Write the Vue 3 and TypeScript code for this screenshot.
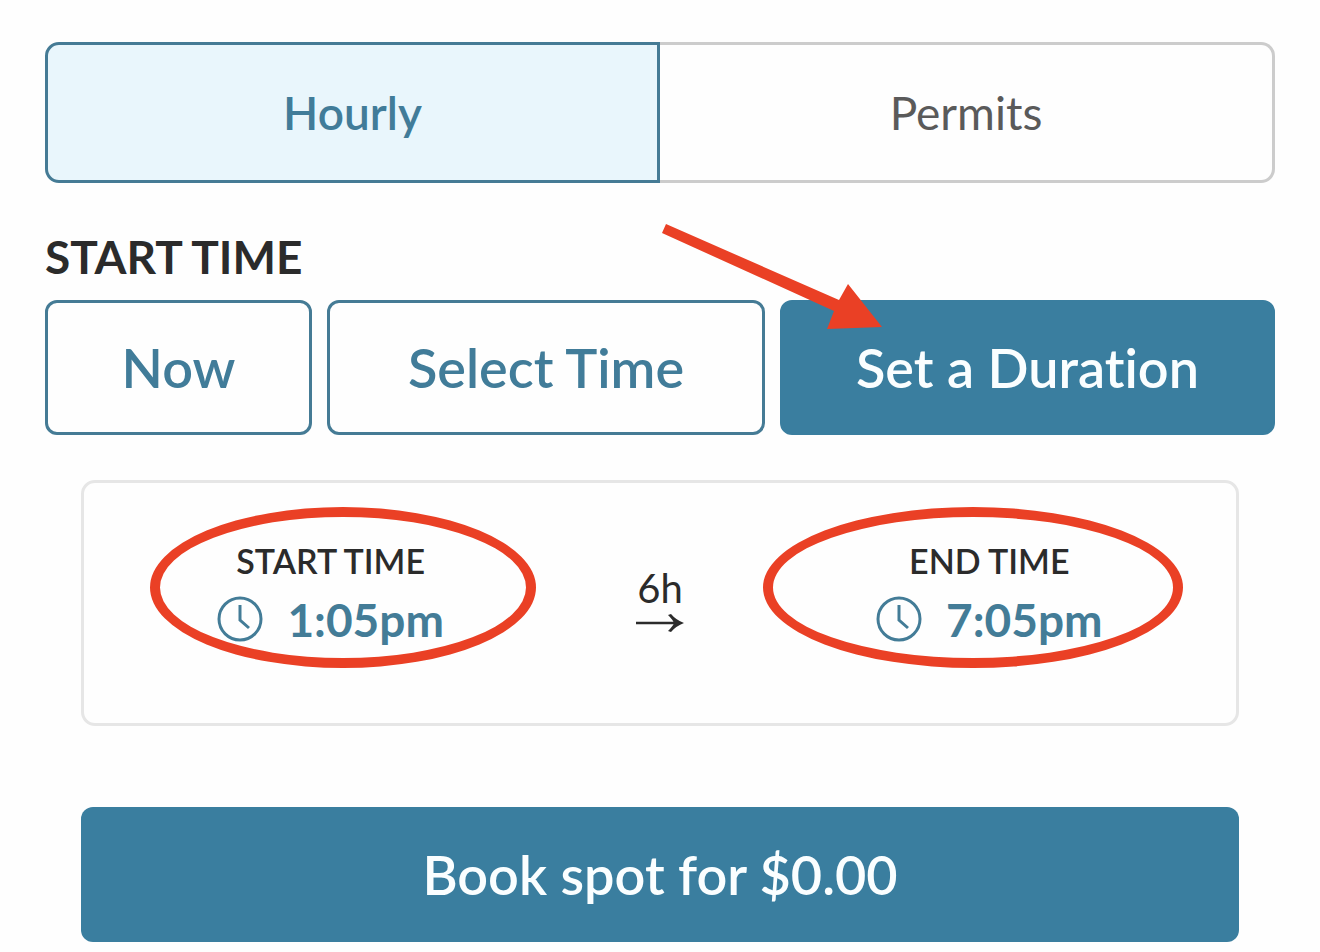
<script setup lang="ts">
import { ref } from 'vue'

type Plan = 'Hourly' | 'Permits'
type Mode = 'now' | 'select' | 'duration'

interface TimePoint {
  id: string
  label: string
  time: string
}

const plans: Plan[] = ['Hourly', 'Permits']
const plan = ref<Plan>('Hourly')

const modes: { id: Mode; label: string }[] = [
  { id: 'now', label: 'Now' },
  { id: 'select', label: 'Select Time' },
  { id: 'duration', label: 'Set a Duration' },
]
const mode = ref<Mode>('duration')

const start: TimePoint = { id: 'start', label: 'START TIME', time: '1:05pm' }
const end: TimePoint = { id: 'end', label: 'END TIME', time: '7:05pm' }
const points: TimePoint[] = [start, end]
</script>

<template>
  <main class="booking">
    <div class="tabs" role="group" aria-label="Parking type">
      <button
        v-for="p in plans"
        :key="p"
        type="button"
        class="tab"
        :class="{ active: plan === p }"
        :aria-pressed="plan === p"
        @click="plan = p"
      >
        {{ p }}
      </button>
    </div>

    <h2 id="start-heading" class="heading">START TIME</h2>
    <div class="modes" role="group" aria-labelledby="start-heading">
      <div v-for="m in modes" :key="m.id" class="mode-cell" :class="m.id">
        <button
          type="button"
          class="mode"
          :class="{ active: mode === m.id }"
          :aria-pressed="mode === m.id"
          @click="mode = m.id"
        >
          {{ m.label }}
        </button>
        <svg v-if="m.id === 'duration'" class="pointer" viewBox="0 0 222 108" aria-hidden="true">
          <path d="M4 1 L177 77 L186 61 L220 104 L165 106 L172 88 L0 10 Z" />
        </svg>
      </div>
    </div>

    <section class="summary" aria-label="Duration">
      <template v-for="(t, i) in points" :key="t.id">
        <div v-if="i === 1" class="span">
          <span class="hours">6h</span>
          <svg class="arrow" viewBox="0 0 48 20" aria-hidden="true">
            <path d="M0 10 H42" fill="none" stroke="currentColor" stroke-width="2.5" />
            <path d="M35 1 Q40 7 48 10 Q40 13 35 19 L32 18 Q37 13 38 10 Q37 7 32 2 Z" fill="currentColor" />
          </svg>
        </div>
        <div class="point">
          <span :id="`${t.id}-label`" class="label">{{ t.label }}</span>
          <button type="button" class="time" :aria-describedby="`${t.id}-label`">
            <svg class="clock" viewBox="0 0 46 46" aria-hidden="true">
              <circle cx="23" cy="23" r="21" />
              <path d="M23 9 V24 L32 32" />
            </svg>
            <span>{{ t.time }}</span>
          </button>
          <span class="ring" :class="t.id" aria-hidden="true"></span>
        </div>
      </template>
    </section>

    <button type="button" class="book">Book spot for $0.00</button>
  </main>
</template>

<style>
body {
  background: #fefefe;
}
</style>

<style scoped>
.booking {
  --blue: #3a7e9f;
  --line: #457b95;
  --mark: #ea4025;
  --ink: #2b2b2b;
  box-sizing: border-box;
  display: flex;
  flex-direction: column;
  padding: 42px 45px 10px;
  font-family: Lato, "Open Sans", sans-serif;
  font-variant-ligatures: none;
  color: var(--ink);
}

button {
  box-sizing: border-box;
  margin: 0;
  font-family: inherit;
  font-variant-ligatures: none;
  font-weight: 600;
  cursor: pointer;
}

.tabs {
  display: flex;
}

.tab {
  flex: 0 0 50%;
  height: 141px;
  border: 3px solid #cccccc;
  border-left: 0;
  border-radius: 0 14px 14px 0;
  background: #fefefe;
  color: #5a5a5a;
  font-size: 46px;
  font-weight: 400;
}

.tab:first-child {
  border-left: 3px solid #cccccc;
  border-radius: 14px 0 0 14px;
}

.tab.active {
  border-color: var(--line);
  background: #e9f6fc;
  color: #417c99;
  font-weight: 600;
}

.heading {
  margin: 44px 0 13px;
  font-size: 46px;
  line-height: 60px;
  font-weight: 700;
}

.modes {
  display: flex;
  gap: 15px;
}

.mode-cell {
  position: relative;
  flex: 267 1 0;
}

.mode-cell.select {
  flex-grow: 438;
}

.mode-cell.duration {
  flex-grow: 495;
}

.mode {
  width: 100%;
  height: 135px;
  border: 3px solid var(--line);
  border-radius: 12px;
  background: #fefefe;
  color: #417c99;
  font-size: 54px;
}

.mode.active {
  border-color: var(--blue);
  background: var(--blue);
  color: #fafeff;
}

.pointer {
  position: absolute;
  top: -77px;
  left: -118px;
  width: 222px;
  height: 108px;
  fill: var(--mark);
  pointer-events: none;
}

.summary {
  display: grid;
  grid-template-columns: repeat(3, 1fr);
  align-items: start;
  margin: 45px 36px 0;
  padding: 56px 82px 68px;
  border: 3px solid #e6e6e6;
  border-radius: 14px;
}

.point {
  position: relative;
  display: flex;
  flex-direction: column;
  align-items: center;
}

.label {
  font-size: 34px;
  line-height: 44px;
  font-weight: 600;
}

.time {
  display: flex;
  align-items: center;
  gap: 24px;
  height: 72px;
  padding: 0;
  border: 0;
  background: none;
  color: #437c97;
  font-size: 46px;
  font-weight: 700;
}

.clock {
  width: 46px;
  height: 46px;
  fill: none;
  stroke: currentColor;
  stroke-width: 3;
}

.span {
  display: flex;
  flex-direction: column;
  align-items: center;
  padding-top: 24px;
}

.hours {
  font-size: 40px;
  line-height: 50px;
}

.arrow {
  width: 48px;
  height: 20px;
}

.ring {
  position: absolute;
  top: -32px;
  left: 50%;
  box-sizing: border-box;
  width: 386px;
  height: 161px;
  margin-left: -181px;
  border: 10px solid var(--mark);
  border-radius: 50%;
  pointer-events: none;
}

.ring.end {
  width: 420px;
  margin-left: -226px;
}

.book {
  height: 135px;
  margin: 81px 36px 0;
  border: 0;
  border-radius: 12px;
  background: var(--blue);
  color: #fafeff;
  font-size: 54px;
}
</style>
